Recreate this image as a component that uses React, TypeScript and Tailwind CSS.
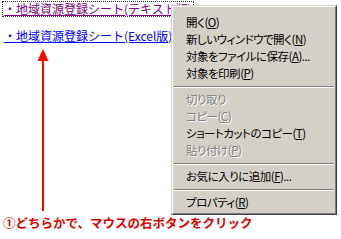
import React from 'react';

const jp = { fontFamily: '"Noto Sans CJK JP", "Noto Sans", sans-serif' };

type Item = { label: string; key?: string; tail?: string; disabled?: boolean };

const groups: Item[][] = [
  [
    { label: '開く', key: 'O' },
    { label: '新しいウィンドウで開く', key: 'N' },
    { label: '対象をファイルに保存', key: 'A', tail: '...' },
    { label: '対象を印刷', key: 'P' },
  ],
  [
    { label: '切り取り', disabled: true },
    { label: 'コピー', key: 'C', disabled: true },
    { label: 'ショートカットのコピー', key: 'T' },
    { label: '貼り付け', key: 'P', disabled: true },
  ],
  [{ label: 'お気に入りに追加', key: 'F', tail: '...' }],
  [{ label: 'プロパティ', key: 'R' }],
];

const MenuRow = ({ item }: { item: Item }) => (
  <div
    className={`h-[17px] flex items-center pl-[13px] text-[11.5px] tracking-[-0.5px] leading-none whitespace-nowrap [font-feature-settings:'palt'] ${
      item.disabled ? 'text-[#808080] [text-shadow:1px_1px_0_#ffffff]' : 'text-black'
    }`}
  >
    <span>{item.label}</span>
    {item.key && (
      <span>
        (<span className="underline underline-offset-1">{item.key}</span>)
      </span>
    )}
    {item.tail && <span>{item.tail}</span>}
  </div>
);

const Separator = () => (
  <div className="h-[9px] flex flex-col justify-center px-[1px]">
    <div className="h-px bg-[#808080]" />
    <div className="h-px bg-white" />
  </div>
);

export default function App() {
  return (
    <div className="relative w-[341px] h-[239px] bg-white overflow-hidden" style={jp}>
      <div className="flex flex-col pl-[2px] pt-[1px]">
        <div className="self-start border border-dotted border-[#333] px-[1px] h-[16px] flex items-center">
          <span className="text-[12px] leading-none text-[#800080] underline whitespace-nowrap">
            ・地域資源登録シート(テキスト版)
          </span>
        </div>
        <div className="mt-[12px] pl-[2px] h-[14px] flex items-center">
          <span className="text-[12px] leading-none text-[#0000ff] underline whitespace-nowrap">
            ・地域資源登録シート(Excel版)
          </span>
        </div>
        <svg className="ml-[34px] mt-[6px]" width="14" height="162" viewBox="0 0 14 162">
          <polygon points="7,0 1.5,12 12.5,12" fill="#ff0000" />
          <rect x="6" y="10" width="2" height="152" fill="#ff0000" />
        </svg>
        <div className="mt-[4px] pl-[1px] text-[12.5px] leading-[15px] font-bold text-[#e00000] whitespace-nowrap">
          ①どちらかで、マウスの右ボタンをクリック
        </div>
      </div>

      <div className="absolute left-[171px] top-[5px] w-[166px] h-[210px] bg-[#d4d0c8] border border-t-[#d4d0c8] border-l-[#d4d0c8] border-r-[#404040] border-b-[#404040]">
        <div className="h-full border border-t-white border-l-white border-r-[#808080] border-b-[#808080] pt-[7px] pb-[3px]">
          {groups.map((g, gi) => (
            <div key={gi}>
              {gi > 0 && <Separator />}
              {g.map((it, i) => (
                <MenuRow key={i} item={it} />
              ))}
            </div>
          ))}
        </div>
      </div>
    </div>
  );
}
